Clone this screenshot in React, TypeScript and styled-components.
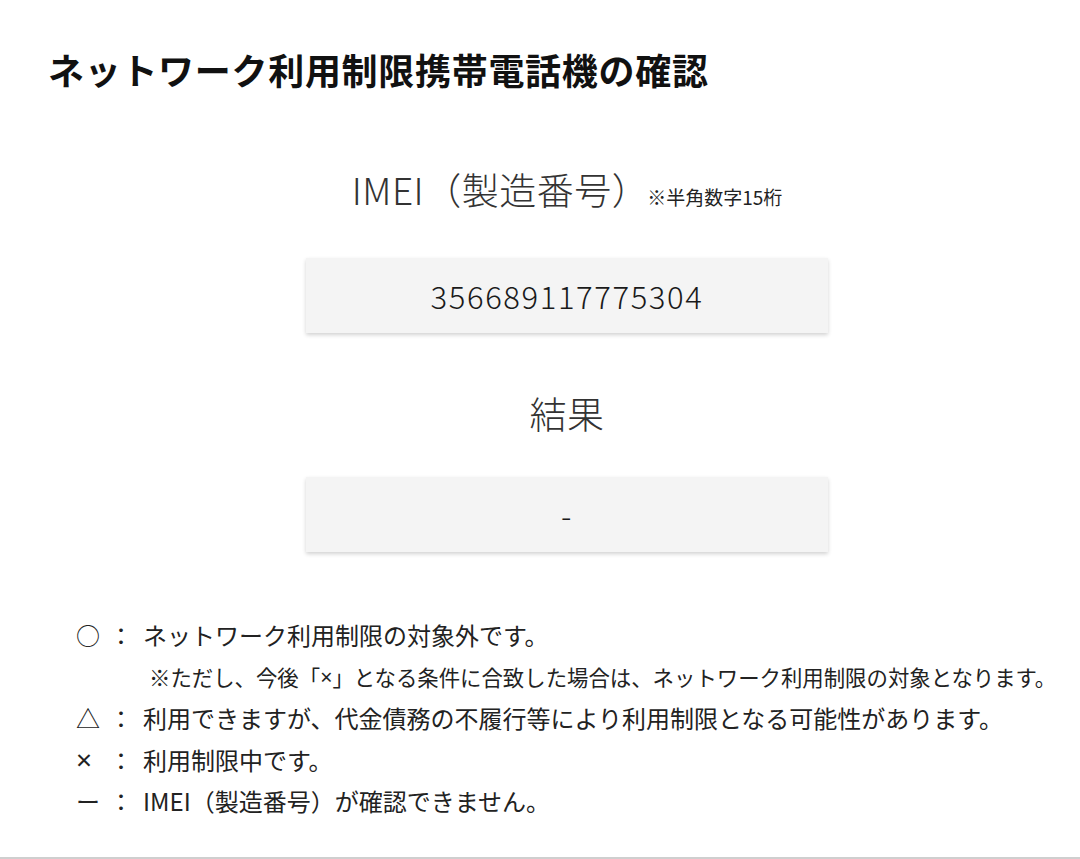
import React from "react";
import styled, { createGlobalStyle } from "styled-components";

const Global = createGlobalStyle`
  html, body { margin: 0; padding: 0; background: #fff; }
  body { font-family: "Noto Sans CJK JP", "Noto Sans", sans-serif; color: #222; }
`;

const Page = styled.div`
  box-sizing: border-box;
  height: 859px;
  border-bottom: 2px solid #cfcfcf;
  overflow: hidden;
`;

const Title = styled.h1`
  margin: 0;
  padding: 41px 0 0 48px;
  font-size: 36px;
  line-height: 56px;
  font-weight: 700;
  color: #111;
  letter-spacing: 0.7px;
`;

const Main = styled.main`
  padding-left: 54px;
  display: flex;
  flex-direction: column;
  align-items: center;
`;

const Heading = styled.h2<{ $top: number }>`
  margin: ${(p) => p.$top}px 0 0;
  font-size: 37px;
  line-height: 50px;
  font-weight: 300;
  color: #333;
  letter-spacing: 0.5px;
  display: flex;
  align-items: baseline;
`;

const Note = styled.span`
  font-size: 19px;
  font-weight: 400;
  color: #222;
  letter-spacing: 0;
  margin-left: -2px;
`;

const Field = styled.div<{ $top: number }>`
  margin-top: ${(p) => p.$top}px;
  width: 522px;
  height: 75px;
  background: #f4f4f4;
  box-shadow: 0 2px 4px rgba(0, 0, 0, 0.18);
  display: flex;
  align-items: center;
  justify-content: center;
  font-size: 31px;
  font-weight: 300;
  color: #1a1a1a;
  letter-spacing: 1.6px;
`;

const Legend = styled.div`
  margin-top: 62px;
  padding-left: 76px;
  display: flex;
  flex-direction: column;
`;

const Row = styled.div`
  display: flex;
  align-items: center;
  height: 41.5px;
  font-size: 24px;
  color: #222;
`;

const Mark = styled.span`
  width: 33px;
  display: inline-block;
`;

const SmallMark = styled(Mark)`
  font-family: "Noto Sans", sans-serif;
  font-size: 28px;
  line-height: 1;
`;

const Colon = styled.span`
  width: 24px;
  margin-right: 10px;
  display: inline-block;
`;

const SubRow = styled.div`
  height: 41.5px;
  display: flex;
  align-items: center;
  padding-left: 73px;
  font-size: 21.4px;
  color: #222;
`;

const Latin = styled.span`
  font-family: "Noto Sans", sans-serif;
`;

export default function App() {
  return (
    <Page>
      <Global />
      <Title>ネットワーク利用制限携帯電話機の確認</Title>
      <Main>
        <Heading $top={67}>
          IMEI（製造番号）<Note>※半角数字15桁</Note>
        </Heading>
        <Field $top={36}>356689117775304</Field>
        <Heading $top={55}>結果</Heading>
        <Field $top={39}>-</Field>
      </Main>
      <Legend>
        <Row>
          <Mark>○</Mark>
          <Colon>：</Colon>
          ネットワーク利用制限の対象外です。
        </Row>
        <SubRow>
          ※ただし、今後「<Latin>×</Latin>」となる条件に合致した場合は、ネットワーク利用制限の対象となります。
        </SubRow>
        <Row>
          <Mark>△</Mark>
          <Colon>：</Colon>
          利用できますが、代金債務の不履行等により利用制限となる可能性があります。
        </Row>
        <Row>
          <SmallMark>×</SmallMark>
          <Colon>：</Colon>
          利用制限中です。
        </Row>
        <Row>
          <Mark>ー</Mark>
          <Colon>：</Colon>
          IMEI（製造番号）が確認できません。
        </Row>
      </Legend>
    </Page>
  );
}
